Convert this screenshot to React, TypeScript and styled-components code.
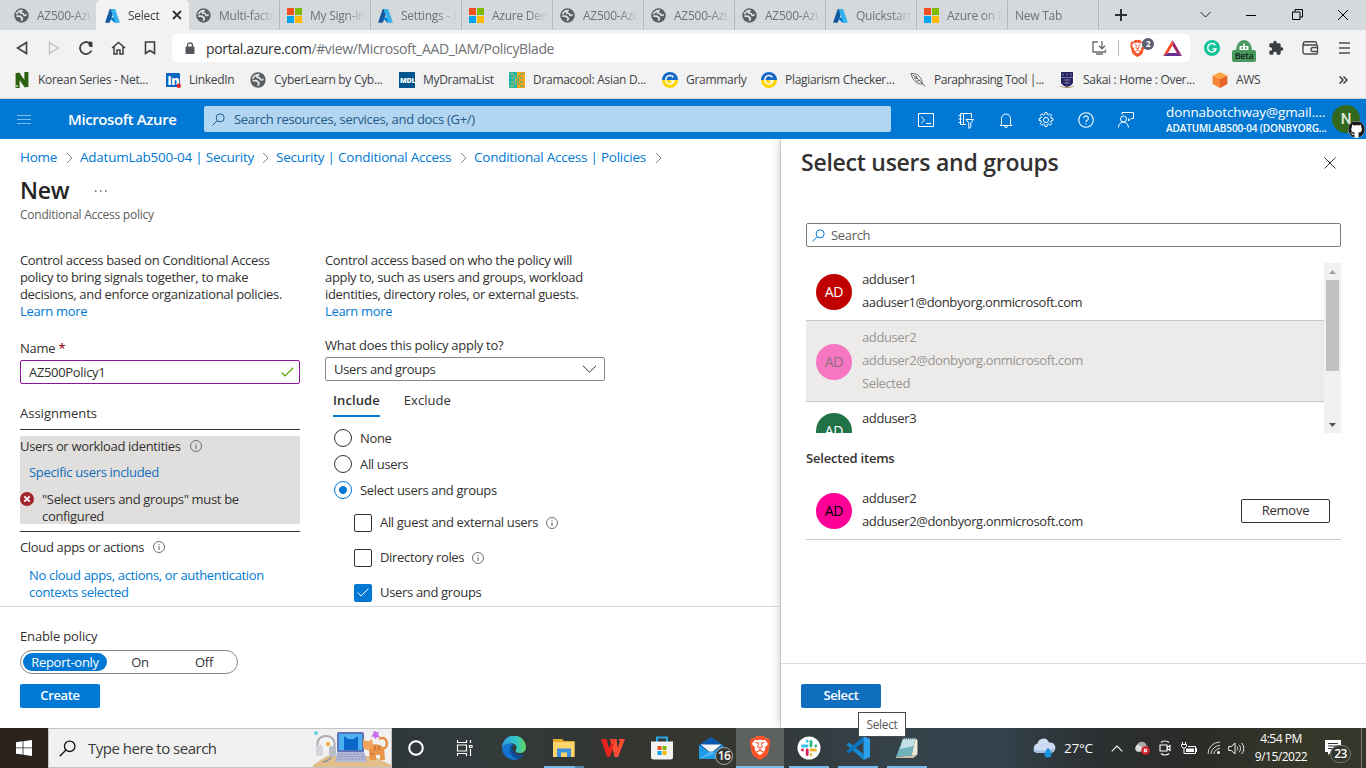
import React from 'react';
import styled, { createGlobalStyle } from 'styled-components';
import { FaGithub } from 'react-icons/fa';
import { SiBrave } from 'react-icons/si';

const GlobalStyle = createGlobalStyle`
  * { box-sizing: border-box; }
  body { margin: 0; background: #fff; overflow: hidden; }
  svg { display: block; flex: none; }
`;

const Screen = styled.div`
  width: 1366px;
  height: 768px;
  display: flex;
  flex-direction: column;
  overflow: hidden;
  position: relative;
  font: 13px/17px "Open Sans", "Noto Sans", sans-serif;
  letter-spacing: -0.33px;
  color: #323130;
  white-space: nowrap;
`;

/* ---------- browser chrome ---------- */

const TabStrip = styled.div`
  height: 30px;
  background: #d5d9dc;
  display: flex;
  padding-left: 6px;
`;
const Tab = styled.div<{ $active?: boolean; $divider?: boolean }>`
  width: 91px;
  height: 30px;
  padding: 0 4px 0 8px;
  display: flex;
  align-items: center;
  gap: 8px;
  font-size: 12px;
  letter-spacing: -0.25px;
  color: ${p => (p.$active ? '#3b3e42' : '#6f7276')};
  background: ${p => (p.$active ? '#f2f2f2' : 'transparent')};
  border-radius: ${p => (p.$active ? '5px 5px 0 0' : '0')};
  box-shadow: ${p => (p.$divider ? 'inset 1px 0 #b4b8ba' : 'none')};
  ${p => p.$active && 'width: 93px; margin: 0 -1px; padding: 0 7px 0 9px;'}
`;
const TabTitle = styled.span<{ $fade: string }>`
  flex: 1;
  overflow: hidden;
  mask-image: linear-gradient(90deg, #000 ${p => p.$fade}, transparent 100%);
`;
const NewTabButton = styled.div`
  width: 45px;
  display: flex;
  align-items: center;
  justify-content: center;
  box-shadow: inset 1px 0 #b4b8ba;
`;
const WindowControls = styled.div`
  display: flex;
  margin-left: auto;
`;
const WindowButton = styled.div`
  width: 46px;
  padding-bottom: 1px;
  display: flex;
  align-items: center;
  justify-content: center;
`;
const Toolbar = styled.div`
  height: 36px;
  background: #f2f2f2;
  display: flex;
  align-items: center;
  padding-left: 6px;
`;
const ToolButton = styled.div<{ $w?: number }>`
  width: ${p => p.$w ?? 32}px;
  height: 32px;
  display: flex;
  align-items: center;
  justify-content: center;
  position: relative;
`;
const AddressBar = styled.div`
  width: 1018px;
  height: 28px;
  margin: 0 6px;
  background: #fff;
  border-radius: 4px;
  display: flex;
  align-items: center;
  padding-left: 13px;
  font-size: 14px;
  letter-spacing: -0.35px;
  color: #6e7175;
`;
const UrlText = styled.span`
  margin-left: 11px;
  flex: 1;
  b { font-weight: 400; color: #2f3235; }
`;
const BarDivider = styled.div`
  width: 1px;
  height: 16px;
  background: #b5b8bb;
`;
const ShieldCount = styled.span`
  position: absolute;
  left: 23px;
  top: 6px;
  width: 12px;
  height: 12px;
  border-radius: 6px;
  background: #5b6070;
  color: #fff;
  font: 700 8px/12px "Open Sans", sans-serif;
  text-align: center;
`;
const BetaBadge = styled.span`
  position: absolute;
  left: 4px;
  top: 18px;
  width: 24px;
  height: 12px;
  border-radius: 2px;
  background: #4a9a5f;
  color: #10241a;
  font: 600 9px/12px "Open Sans", sans-serif;
  text-align: center;
`;
const BookmarksBar = styled.div`
  height: 33px;
  background: #f2f2f2;
  border-bottom: 1px solid #d4d4d4;
  display: flex;
  align-items: center;
  padding: 0 0 4px 14px;
  font-size: 12px;
  color: #3f4246;
`;
const Bookmark = styled.div<{ $w: number }>`
  width: ${p => p.$w}px;
  display: flex;
  align-items: center;
  gap: 8px;
`;
const BookmarkLabel = styled.span<{ $track?: number }>`
  margin-top: -1px;
  letter-spacing: ${p => p.$track ?? -0.3}px;
`;

/* ---------- Azure header ---------- */

const AzureHeader = styled.header`
  height: 40px;
  background: #0078d4;
  color: #fff;
  display: flex;
  align-items: center;
  padding-left: 16px;
`;
const Brand = styled.div`
  width: 136px;
  margin-left: 36px;
  font-size: 15px;
  font-weight: 600;
  letter-spacing: -0.4px;
`;
const GlobalSearch = styled.div`
  width: 687px;
  height: 26px;
  background: #b2d6f2;
  border-radius: 2px;
  display: flex;
  align-items: center;
  gap: 9px;
  padding-left: 8px;
  color: #245a87;
  letter-spacing: -0.3px;
`;
const HeaderIcons = styled.div`
  display: flex;
  margin-left: 15px;
`;
const HeaderIcon = styled.div`
  width: 40px;
  padding-top: 1px;
  display: flex;
  justify-content: center;
  align-items: center;
`;
const Account = styled.div`
  width: 161px;
  margin-left: 20px;
  padding-top: 2px;
`;
const AccountMail = styled.div`
  font-size: 13.5px;
  line-height: 17px;
  letter-spacing: -0.09px;
`;
const AccountTenant = styled.div`
  font-size: 10px;
  font-weight: 600;
  line-height: 15px;
  letter-spacing: -0.13px;
`;
const ProfileCircle = styled.div`
  width: 28px;
  height: 28px;
  margin-left: 5px;
  border-radius: 50%;
  background: #33691e;
  color: #dfe8da;
  font: 500 15px/28px Roboto, sans-serif;
  text-align: center;
  position: relative;
`;
const ProfileMark = styled.div`
  position: absolute;
  left: 16px;
  top: 16px;
  width: 17px;
  height: 17px;
  border-radius: 50%;
  background: #fff;
  color: #1b1b1f;
`;

/* ---------- policy blade ---------- */

const Workspace = styled.div`
  height: 589px;
  display: flex;
`;
const Blade = styled.main`
  width: 781px;
  display: flex;
  flex-direction: column;
`;
const Breadcrumbs = styled.nav`
  display: flex;
  align-items: center;
  padding: 10px 0 0 20px;
  color: #0078d4;
  font-size: 13.5px;
`;
const Crumb = styled.span<{ $w: number; $track?: number }>`
  width: ${p => p.$w}px;
  letter-spacing: ${p => p.$track ?? -0.24}px;
`;
const CrumbChevron = styled.span`
  width: 22px;
  display: flex;
  justify-content: center;
`;
const TitleRow = styled.div`
  display: flex;
  align-items: center;
  height: 32px;
  margin: 9px 0 0 20px;
`;
const PageTitle = styled.h1`
  margin: -2px 0 0;
  width: 75px;
  font-size: 23px;
  line-height: 32px;
  font-weight: 600;
  letter-spacing: -0.3px;
  color: #262423;
`;
const Subtitle = styled.div`
  margin: 0 0 0 20px;
  font-size: 12px;
  line-height: 16px;
  color: #605e5c;
  letter-spacing: -0.25px;
`;
const Columns = styled.div`
  display: flex;
  flex: 1;
  padding: 29px 0 0 20px;
  overflow: hidden;
`;
const Column = styled.section<{ $w: number }>`
  width: ${p => p.$w}px;
  margin-right: 25px;
`;
const Link = styled.a`
  color: #0078d4;
`;
const FieldLabel = styled.div<{ $top: number }>`
  margin: ${p => p.$top}px 0 3px;
  letter-spacing: -0.25px;
  em { color: #a4262c; font-style: normal; font-weight: 600; }
`;
const FieldBox = styled.div<{ $color: string }>`
  height: 24px;
  border: 1px solid ${p => p.$color};
  border-radius: 2px;
  display: flex;
  align-items: center;
  justify-content: space-between;
  padding: 0 5px 0 8px;
`;
const SectionHead = styled.div`
  margin-top: 20px;
  padding-top: 1px;
  height: 26px;
  border-bottom: 1px solid #323130;
  letter-spacing: 0;
`;
const AssignmentCard = styled.div<{ $active?: boolean }>`
  margin-top: ${p => (p.$active ? 6 : 5)}px;
  background: ${p => (p.$active ? '#e1dfdd' : 'transparent')};
  height: ${p => (p.$active ? 88 : 70)}px;
`;
const LabelRow = styled.div`
  display: flex;
  align-items: center;
  gap: 9px;
  height: 20px;
  line-height: 19px;
`;
const AssignmentLink = styled.div<{ $hover?: boolean }>`
  padding: ${p => (p.$hover ? 8 : 10)}px 0 0 9px;
  color: ${p => (p.$hover ? '#106ebe' : '#0078d4')};
`;
const ErrorRow = styled.div`
  display: flex;
  gap: 8px;
  margin-top: 10px;
`;
const SectionRule = styled.div`
  margin-top: 7px;
  height: 1px;
  background: #323130;
`;
const Pivot = styled.div`
  display: flex;
  gap: 24px;
  padding: 10px 0 0 8px;
`;
const PivotItem = styled.div<{ $active?: boolean }>`
  height: 26px;
  padding-top: 1px;
  font-weight: ${p => (p.$active ? 600 : 400)};
  letter-spacing: ${p => (p.$active ? 0.1 : 0.04)}px;
  border-bottom: ${p => (p.$active ? '2px solid #0078d4' : 'none')};
`;
const OptionRow = styled.div<{ $h: number; $indent: number }>`
  height: ${p => p.$h}px;
  padding-left: ${p => p.$indent}px;
  display: flex;
  align-items: center;
  gap: 8px;
`;
const OptionGroup = styled.div<{ $top: number }>`
  margin-top: ${p => p.$top}px;
`;
const Radio = styled.span<{ $on?: boolean }>`
  width: 18px;
  height: 18px;
  border-radius: 50%;
  border: 1px solid ${p => (p.$on ? '#0078d4' : '#323130')};
  background: ${p => (p.$on ? 'radial-gradient(circle, #0078d4 3.6px, transparent 4.3px)' : '#fff')};
`;
const Check = styled.span<{ $on?: boolean }>`
  width: 18px;
  height: 18px;
  border-radius: 2px;
  border: 1px solid ${p => (p.$on ? '#0078d4' : '#323130')};
  background: ${p => (p.$on ? '#0078d4' : '#fff')};
  display: flex;
  align-items: center;
  justify-content: center;
`;
const BladeFooter = styled.footer`
  height: 122px;
  border-top: 1px solid #dcdcdc;
  padding: 21px 0 0 20px;
  letter-spacing: -0.15px;
`;
const Segmented = styled.div`
  width: 218px;
  height: 24px;
  margin: 5px 0 10px;
  border: 1px solid #8a8886;
  border-radius: 12px;
  display: flex;
  padding: 2px;
`;
const Segment = styled.span<{ $w: number; $on?: boolean }>`
  width: ${p => p.$w}px;
  line-height: 18px;
  text-align: center;
  border-radius: 9px;
  background: ${p => (p.$on ? '#0078d4' : 'transparent')};
  color: ${p => (p.$on ? '#fff' : '#323130')};
  font-weight: ${p => (p.$on ? 500 : 400)};
  letter-spacing: -0.3px;
`;
const PrimaryButton = styled.button<{ $hover?: boolean }>`
  display: block;
  width: 80px;
  height: 24px;
  padding: 0 0 1px;
  border: 0;
  border-radius: 2px;
  background: ${p => (p.$hover ? '#106ebe' : '#0078d4')};
  color: #fff;
  font: inherit;
  font-weight: 600;
  letter-spacing: -0.35px;
`;

/* ---------- user picker ---------- */

const Picker = styled.aside`
  width: 585px;
  background: #fff;
  box-shadow: 0 0 10px rgba(0, 0, 0, 0.25), -1px 0 #e0e0e0;
  clip-path: inset(0 0 0 -14px);
  display: flex;
  flex-direction: column;
`;
const PickerHead = styled.div`
  height: 84px;
  padding: 8px 30px 0 20px;
  display: flex;
  justify-content: space-between;
`;
const PickerTitle = styled.h2`
  margin: 0;
  font-size: 23px;
  line-height: 31px;
  font-weight: 600;
  letter-spacing: -0.25px;
`;
const CloseButton = styled.div`
  padding-top: 10px;
`;
const PickerBody = styled.div`
  flex: 1;
  padding: 0 25px;
`;
const SearchBox = styled.div`
  height: 24px;
  border: 1px solid #7d7b79;
  border-radius: 2px;
  display: flex;
  align-items: center;
  gap: 6px;
  padding-left: 5px;
  color: #605e5c;
`;
const ListFrame = styled.div`
  display: flex;
  height: 170px;
  margin-top: 16px;
  overflow: hidden;
`;
const UserList = styled.div`
  flex: 1;
`;
const UserRow = styled.div<{ $picked?: boolean }>`
  padding: 5px 10px 6px;
  border-bottom: 1px solid #c8c8c8;
  background: ${p => (p.$picked ? '#edebe9' : '#fff')};
  color: ${p => (p.$picked ? '#979593' : '#323130')};
  display: flex;
  align-items: center;
`;
const UserLines = styled.div`
  flex: 1;
  line-height: 23px;
  letter-spacing: -0.39px;
`;
const Persona = styled.div<{ $bg: string; $fg: string }>`
  width: 36px;
  height: 36px;
  margin: 2px 10px 0 0;
  border-radius: 50%;
  background: ${p => p.$bg};
  color: ${p => p.$fg};
  font-size: 14px;
  line-height: 36px;
  text-align: center;
`;
const Scrollbar = styled.div`
  width: 17px;
  background: #f1f1f1;
  display: flex;
  flex-direction: column;
  align-items: center;
`;
const ScrollArrow = styled.div`
  height: 17px;
  display: flex;
  align-items: center;
`;
const ScrollThumb = styled.div`
  width: 13px;
  height: 91px;
  margin-bottom: auto;
  background: #c1c1c1;
`;
const SelectedTitle = styled.div`
  margin: 17px 0 15px;
  font-weight: 600;
  letter-spacing: -0.2px;
`;
const RemoveButton = styled.button`
  width: 89px;
  height: 24px;
  margin: 2px 1px 0 0;
  padding: 0 0 1px;
  border: 1px solid #323130;
  border-radius: 2px;
  background: #fff;
  font: inherit;
  color: #323130;
  font-weight: 500;
  letter-spacing: -0.25px;
`;
const PickerFooter = styled.footer`
  height: 65px;
  border-top: 1px solid #dcdcdc;
  padding: 20px;
`;
const Tooltip = styled.div`
  position: absolute;
  left: 858px;
  top: 712px;
  z-index: 3;
  width: 48px;
  height: 25px;
  border: 1px solid #4a4a4a;
  background: #fff;
  color: #575757;
  font-size: 12px;
  line-height: 23px;
  text-align: center;
`;

/* ---------- taskbar ---------- */

const Taskbar = styled.div`
  height: 40px;
  display: flex;
  background: linear-gradient(90deg, #2b221b 0, #2b221b 48px, #31383a 392px, #323a3a 500px, #34352f 640px, #353831 740px, #333b3e 800px, #35424a 900px, #34424c 1000px, #2b3032 1090px, #2c2b28 1200px, #36382a 1300px, #34362b 100%);
  color: #fff;
`;
const StartButton = styled.div`
  width: 48px;
  display: flex;
  align-items: center;
  justify-content: center;
`;
const TaskSearch = styled.div`
  width: 344px;
  background: #f1f1f1;
  border: 1px solid #c4c4c4;
  display: flex;
  align-items: center;
  padding-left: 10px;
  color: #3a3a3a;
  font-size: 15px;
  letter-spacing: -0.5px;
`;
const TaskHint = styled.span`
  width: 226px;
  margin-left: 12px;
`;
const TaskIcon = styled.div<{ $w: number; $active?: boolean }>`
  width: ${p => p.$w}px;
  height: 40px;
  display: flex;
  align-items: center;
  justify-content: center;
  position: relative;
  background: ${p => (p.$active ? '#5e625e' : 'transparent')};
`;
const RunningBar = styled.span<{ $w: number }>`
  position: absolute;
  bottom: 0;
  left: 50%;
  width: ${p => p.$w}px;
  margin-left: ${p => -p.$w / 2}px;
  height: 2px;
  background: #76b9ed;
`;
const StackedBar = styled(RunningBar)`
  background: linear-gradient(90deg, #76b9ed 31px, #5182a8 31px);
`;
const CountBubble = styled.span<{ $x: number; $y: number; $dim?: boolean }>`
  position: absolute;
  left: ${p => p.$x}px;
  top: ${p => p.$y}px;
  width: ${p => (p.$dim ? 21 : 18)}px;
  height: 18px;
  border-radius: 9px;
  border: 1px solid ${p => (p.$dim ? '#77776f' : '#a5a8a6')};
  background: #33352f;
  color: #fff;
  font-size: 12px;
  font-weight: 600;
  line-height: 15px;
  letter-spacing: -0.6px;
  text-align: center;
`;
const Tray = styled.div`
  display: flex;
  align-items: center;
  margin-left: auto;
`;
const TrayItem = styled.div<{ $w: number }>`
  width: ${p => p.$w}px;
  display: flex;
  justify-content: center;
`;
const Temperature = styled.div`
  width: 42px;
  margin-left: 8px;
  font-size: 13.5px;
  letter-spacing: -0.2px;
`;
const Clock = styled.div`
  width: 70px;
  text-align: center;
  font-size: 12px;
  line-height: 18px;
  letter-spacing: -0.5px;
`;
const NoticeCenter = styled.div`
  width: 45px;
  height: 40px;
  padding: 12px 0 0 9px;
  position: relative;
`;
const PeekStrip = styled.div`
  width: 5px;
  height: 40px;
  border-left: 1px solid #7b7c72;
`;

/* ---------- drawings ---------- */

const Globe = ({ s = 15 }: { s?: number }) => (
  <svg width={s} height={s} viewBox="0 0 16 16">
    <circle cx="8" cy="8" r="7.7" fill="#5a5d61" />
    <path d="M2.600 6.800C3.500 4.200 5.600 2.700 8.600 2.600c.3 1.200-1.900 1-1.900 2.200 0 1.300 2 .5 3 1.200 1 .8.400 2 1.600 2 .9 0 1.300-.8 2.300-.6" fill="none" stroke="#dfe2e4" strokeWidth="1.700" />
    <path d="M2.500 8.600h2.800c2.600 0 1.800 1.300 3 1.700 1.300.5.3 2.200-.8 3.200" fill="none" stroke="#dfe2e4" strokeWidth="1.900" />
  </svg>
);
const AzureMark = () => (
  <svg width="15" height="15" viewBox="0 0 96 96">
    <path d="M33 6h29L32 90a6 6 0 0 1-5 4H8a5 5 0 0 1-5-7L29 9a5 5 0 0 1 4-3z" fill="#12599f" />
    <path d="M71 61H28l28 29a7 7 0 0 0 5 2h22z" fill="#0078d4" />
    <path d="M66 9a5 5 0 0 0-5-3H35l28 81a5 5 0 0 1-5 7h30a5 5 0 0 0 5-7z" fill="#36b3ee" />
  </svg>
);
const MicrosoftMark = () => (
  <svg width="15" height="15" viewBox="0 0 15 15">
    <path d="M0 0h7v7H0z" fill="#f25022" />
    <path d="M8 0h7v7H8z" fill="#7fba00" />
    <path d="M0 8h7v7H0z" fill="#00a4ef" />
    <path d="M8 8h7v7H8z" fill="#ffb900" />
  </svg>
);
const Stroke = ({ w, h = w, d, c = 'currentColor', sw = 1 }: { w: number; h?: number; d: string; c?: string; sw?: number }) => (
  <svg width={w} height={h} viewBox={`0 0 ${w} ${h}`} fill="none" stroke={c} strokeWidth={sw}>
    <path d={d} />
  </svg>
);
const Info = () => (
  <svg width="12" height="12" viewBox="0 0 12 12" fill="none" stroke="#605e5c">
    <circle cx="6" cy="6" r="5.5" strokeWidth=".9" />
    <path d="M6 5v4M6 3v1" />
  </svg>
);
const Magnifier = ({ c, s = 13 }: { c: string; s?: number }) => (
  <svg width={s} height={s} viewBox="0 0 13 13" fill="none" stroke={c}>
    <circle cx="8.2" cy="4.8" r="4" />
    <path d="M5.3 7.7L.6 12.4" />
  </svg>
);
const BraveShield = ({ s }: { s: number }) => (
  <svg width={s} height={s} viewBox="0 0 24 24">
    <path d="M6 2h12l3 4-1 11-8 6-8-6L3 6z" fill="#fff" />
    <SiBrave width="24" height="24" size={24} color="#fb542b" />
  </svg>
);
const GrammarlyMark = () => (
  <svg width="16" height="16" viewBox="0 0 16 16">
    <path d="M0 8a8 8 0 0 1 16 0z" fill="#1468c8" />
    <path d="M0 8a8 8 0 0 0 16 0z" fill="#ffd500" />
    <path d="M11.300 5.200A4.200 4.200 0 1 0 12 9H8.600" fill="none" stroke="#fff" strokeWidth="1.500" />
  </svg>
);

const tabs = [
  { icon: <Globe />, title: 'AZ500-Azu' },
  { icon: <AzureMark />, title: 'Select', active: true },
  { icon: <Globe />, title: 'Multi-facto' },
  { icon: <MicrosoftMark />, title: 'My Sign-In' },
  { icon: <AzureMark />, title: 'Settings - M' },
  { icon: <MicrosoftMark />, title: 'Azure Dem' },
  { icon: <Globe />, title: 'AZ500-Azu' },
  { icon: <Globe />, title: 'AZ500-Azu' },
  { icon: <Globe />, title: 'AZ500-Azu' },
  { icon: <AzureMark />, title: 'Quickstart' },
  { icon: <MicrosoftMark />, title: 'Azure on M' },
  { icon: null, title: 'New Tab' },
];

const bookmarks = [
  {
    w: 151, label: 'Korean Series - Net...',
    icon: (
      <svg width="16" height="16" viewBox="0 0 16 16">
        <path d="M3.600 16V1M12.400 15V0M3.400 1.500l9.200 13" stroke="#2c5f10" strokeWidth="4" fill="none" />
        <circle cx="3" cy="14" r="1.200" fill="#9cc48a" />
      </svg>
    ),
  },
  {
    w: 85, label: 'LinkedIn',
    icon: (
      <svg width="16" height="16" viewBox="0 0 16 16">
        <rect x="1" y="1" width="14" height="14" rx="1" fill="#0a66c2" />
        <text x="2.600" y="12.800" fontFamily="Open Sans" fontWeight="800" fontSize="12.500" letterSpacing="-.5" fill="#fff">in</text>
        <circle cx="13.800" cy="13.800" r="2.200" fill="#e0202c" />
      </svg>
    ),
  },
  { w: 149, label: 'CyberLearn by Cyb...', icon: <Globe s={16} /> },
  {
    w: 110, label: 'MyDramaList',
    icon: (
      <svg width="16" height="16" viewBox="0 0 16 16">
        <path d="M0 0h16v16H0z" fill="#00568c" />
        <text x="1" y="10.600" fontFamily="Open Sans" fontWeight="800" fontSize="7" letterSpacing="-.2" fill="#fff">MDL</text>
      </svg>
    ),
  },
  {
    w: 153, label: 'Dramacool: Asian D...',
    icon: (
      <svg width="16" height="16" viewBox="0 0 16 16" fill="none">
        <path d="M0 0h8v16H0z" fill="#1db5b0" />
        <path d="M8 0h8v16H8z" fill="#f5a81c" />
        <path d="M1 1.500c4 .5 6 3 6 6.500s-2 6-6 6.500M2.500 6h2M2 10.500c1.500 0 2.500-.8 3-2" stroke="#f5c02c" />
        <path d="M15 1.500c-4 .5-6 3-6 6.500s2 6 6 6.500M13.500 6h-2M14 10.500c-1.500 0-2.500-.8-3-2" stroke="#23a19c" />
      </svg>
    ),
  },
  { w: 99, label: 'Grammarly', icon: <GrammarlyMark /> },
  { w: 149, label: 'Plagiarism Checker...', icon: <GrammarlyMark /> },
  {
    w: 149, label: 'Paraphrasing Tool |...', track: -0.5,
    icon: (
      <svg width="16" height="16" viewBox="0 0 16 16" fill="none" stroke="#55585c" strokeWidth=".9">
        <path d="M1 1.500c5-.5 9.500 2 11 8l.5 2.500c-4 0-6-1-8-3.500S1.500 4 1 1.500zM2.500 3c4 2 8 6 12.500 11.500M4 6l4 .5M6 9l4-.3M6 3.500l.8 2.500" />
      </svg>
    ),
  },
  {
    w: 153, label: 'Sakai : Home : Over...',
    icon: (
      <svg width="16" height="16" viewBox="0 0 16 16" fill="none">
        <path d="M1 0h14v16H1z" fill="#fff" />
        <path d="M2 0h12v10c0 2.500-3 4-6 5-3-1-6-2.500-6-5z" fill="#211f5e" />
        <path d="M4 1v3M8 1v3M12 1v3M2 5.500h12M4.500 8h7M4.500 11h7M8 7v6" stroke="#8d8bb5" strokeWidth=".8" />
        <path d="M1 14c4 2 10 2 14 0" stroke="#a08b5c" />
      </svg>
    ),
  },
  {
    w: 127, label: 'AWS',
    icon: (
      <svg width="16" height="16" viewBox="0 0 16 16">
        <path d="M8 .2l7.200 3.300L8 7 .8 3.500z" fill="#fba63c" />
        <path d="M.6 3.600L8 7v9L.6 12z" fill="#f68536" />
        <path d="M15.400 3.600L8 7v9l7.400-4z" fill="#e8612a" />
      </svg>
    ),
  },
];

const headerIcons = [
  <Stroke w={16} d="M.5 1.500h15v13H.5zM3 4.500l3.500 3.500L3 11.500M8 11.500h5" />,
  <svg width="18" height="18" viewBox="0 0 18 18" fill="none" stroke="currentColor">
    <path d="M14.500 7V2.500H3.500v11H9M1.500 4.500h3M1.500 8h3M1.500 11.500h3M6.500 2.500v11M9 8.500h7.500l-2.700 3.500v4l-2 1.500V12z" />
  </svg>,
  <Stroke w={16} d="M3.500 12V6.500a4.500 4.500 0 0 1 9 0V12l1.500 1.500H2zM6.500 14a1.500 1.500 0 0 0 3 0" />,
  <svg width="18" height="18" viewBox="0 0 18 18" fill="none" stroke="currentColor">
    <circle cx="9" cy="9" r="2.600" />
    <path d="M7.700 3.500 8 1.500h2l.3 2 1.300.5 1.600-1.200 1.500 1.500-1.200 1.600.5 1.300 2 .3v2l-2 .3-.5 1.300 1.200 1.600-1.500 1.500-1.600-1.200-1.300.5-.3 2H8l-.3-2-1.300-.5-1.600 1.200-1.500-1.500 1.200-1.600-.5-1.300-2-.3v-2l2-.3.5-1.300-1.200-1.600 1.500-1.500L6.400 4z" />
  </svg>,
  <svg width="16" height="16" viewBox="0 0 16 16" fill="none" stroke="currentColor" strokeWidth="1.100">
    <circle cx="8" cy="8" r="7.300" />
    <path d="M5.700 6.200a2.300 2.300 0 1 1 3.500 2c-.8.5-1.200.9-1.200 1.900M8 11.200v1.300" />
  </svg>,
  <svg width="18" height="18" viewBox="0 0 18 18" fill="none" stroke="currentColor">
    <circle cx="6.500" cy="8" r="3" />
    <path d="M1.500 16.500c0-3.500 2-5.300 5-5.300s4.500 1.800 5 5.300M5 3.500V1.500h11.500v6H14L11.500 10V7.500" />
  </svg>,
];

const crumbs = [
  { text: 'Home', w: 38 },
  { text: 'AdatumLab500-04 | Security', w: 174 },
  { text: 'Security | Conditional Access', w: 176 },
  { text: 'Conditional Access | Policies', w: 173 },
];

const Slack = () => (
  <svg width="24" height="24" viewBox="0 0 24 24" fill="none" strokeLinecap="round" strokeWidth="2.800">
    <circle cx="12" cy="12" r="11.500" fill="#fff" stroke="none" />
    <path d="M10.200 5.200v.1M5.500 10h4.700" stroke="#36c5f0" />
    <path d="M14 5.500v4.500M18.700 10h.1" stroke="#2eb67d" />
    <path d="M18.500 14H14M14 18.700v.1" stroke="#ecb22e" />
    <path d="M10.200 18.500V14M5.400 14h.1" stroke="#e01e5a" />
  </svg>
);
const VsCode = () => (
  <svg width="24" height="24" viewBox="0 0 24 24">
    <path d="M17.500 24v-6L3 6.500.5 8.700z" fill="#1488d1" />
    <path d="M17.500 0v6L3 17.500.5 15.300z" fill="#0b71b8" />
    <path d="M17.500 0L24 3v18l-6.500 3z" fill="#2ba0ec" />
  </svg>
);
const Notepad = () => (
  <svg width="24" height="24" viewBox="0 0 24 24">
    <path d="M8 2.500h12.500L16.500 19.500 1 21z" fill="#6fb1bd" />
    <path d="M8 2.500h12.500L18.500 10 5 13z" fill="#c3e2e6" />
    <path d="M20.500 2.500l2 1.500v14.500L16.500 20z" fill="#efe9d8" />
    <path d="M1 21l15.500-1.500 6-1-4 3.500H1z" fill="#c9c3ae" />
    <path d="M8 2.500h12.500" stroke="#5b6a70" strokeDasharray="1 1" strokeWidth="2" />
  </svg>
);

const SearchArt = () => (
  <svg width="78" height="38" viewBox="0 0 78 38" fill="none">
    <path d="M0 36l14-9h46l18 9v2H0z" fill="#e3bd8a" />
    <circle cx="3" cy="4" r="2" fill="#61d3e2" />
    <path d="M5 20C3 11 7 7 13 7s10 4 8 13" stroke="#a9adb5" strokeWidth="2" />
    <rect x="3" y="16" width="7" height="11" rx="3" fill="#d3d5da" />
    <rect x="16" y="17" width="7" height="11" rx="3" fill="#b9bdc6" />
    <circle cx="15" cy="15" r="2" fill="#f3a71a" />
    <path d="M18 28c-1 3-4 4-8 5" stroke="#8f949c" strokeWidth="1.500" />
    <rect x="24" y="3" width="27" height="20" rx="1.500" fill="#5b72b5" />
    <rect x="26" y="5" width="23" height="16" fill="#4ab0f2" />
    <path d="M31 21V7l4 3h6l4-3v14z" fill="#0c66c9" />
    <path d="M24 23h27l3 10H22z" fill="#b3b9d6" />
    <path d="M25 25h26M24.500 27.500h28M24 30h29" stroke="#7f88b4" strokeWidth=".8" strokeDasharray="2 1" />
    <path d="M61 1.500l2.500 2 2.500-1-1 3 2 2.500-3 0-1.500 2.500-1.500-2.700-3-.3 2-2z" fill="#c66cf0" />
    <path d="M69 20c5-1 6-5 4-9-1-2-4-3-7-1" stroke="#e2914a" strokeWidth="2.500" />
    <path d="M55 16c6-1 12-2 16 3l1 12h-5v-5h-4v5h-6l-1-9z" fill="#e9954c" />
    <path d="M50 9.500l3 2.500h3l3-2.500 1 8c0 4-9 5-10 0z" fill="#f0a35a" />
    <path d="M62 17v4M66 17v4M57 25h4" stroke="#b9622a" />
  </svg>
);

export default function App() {
  return (
    <Screen>
      <GlobalStyle />
      <TabStrip>
        {tabs.map((t, i) => (
          <Tab key={i} $active={t.active} $divider={i > 2}>
            {t.icon}
            <TabTitle $fade={t.active || !t.icon ? '98%' : '65%'}>{t.title}</TabTitle>
            {t.active && <Stroke w={10} d="M1 1l8 8M9 1l-8 8" c="#2e3135" sw={1.8} />}
          </Tab>
        ))}
        <NewTabButton><Stroke w={12} d="M6 0v12M0 6h12" c="#2e3135" sw={2} /></NewTabButton>
        <WindowControls>
          <WindowButton><Stroke w={11} h={7} d="M.5 1l5 5 5-5" c="#222" /></WindowButton>
          <WindowButton><Stroke w={10} d="M0 5.500h10" c="#000" /></WindowButton>
          <WindowButton><Stroke w={11} d="M.5 3h7.500v7.500H.5zM3 3V.5h7.500V8H8" c="#000" /></WindowButton>
          <WindowButton><Stroke w={10} d="M0 0l10 10M10 0L0 10" c="#000" /></WindowButton>
        </WindowControls>
      </TabStrip>

      <Toolbar>
        <ToolButton><Stroke w={12} h={14} d="M10.500 1.500v11L1.500 7z" c="#3b3e42" sw={1.6} /></ToolButton>
        <ToolButton><Stroke w={12} h={14} d="M1.500 1.500v11L10.500 7z" c="#bdbfc1" sw={1.3} /></ToolButton>
        <ToolButton>
          <svg width="14" height="14" viewBox="0 0 14 14" fill="none" stroke="#3b3e42" strokeWidth="1.800">
            <path d="M12.500 9.500A6 6 0 1 1 11 2.500" />
            <path d="M9.500 3.500a2 2 0 0 1 4-1.500v4h-2a2.500 2.500 0 0 1-2-2.500z" fill="#3b3e42" stroke="none" />
          </svg>
        </ToolButton>
        <ToolButton><Stroke w={15} h={14} d="M1 7l6.500-5.500L14 7M3 5.500v7.500h3V9h3v4h3V5.500" c="#3b3e42" sw={1.5} /></ToolButton>
        <ToolButton><Stroke w={12} h={14} d="M1.500 1h9v11.500L6 9.500l-4.500 3z" c="#3b3e42" sw={1.6} /></ToolButton>
        <AddressBar>
          <svg width="10" height="12" viewBox="0 0 10 12">
            <path d="M1 5h8v6.500H1z" fill="#54575b" stroke="#54575b" />
            <path d="M2.500 5V3.300a2.500 2.500 0 0 1 5 0V5" fill="none" stroke="#54575b" strokeWidth="1.300" />
          </svg>
          <UrlText><b>portal.azure.com</b>/#view/Microsoft_AAD_IAM/PolicyBlade</UrlText>
          <ToolButton $w={38}>
            <Stroke w={15} h={14} d="M6 1H1v10h12.500V8.500M4 13h7M10 0v7.500M7 4.800l3 3 3-3" c="#6b6e72" sw={1.4} />
          </ToolButton>
          <BarDivider />
          <ToolButton $w={36}><BraveShield s={17} /><ShieldCount>2</ShieldCount></ToolButton>
          <ToolButton $w={35}>
            <svg width="19" height="16" viewBox="0 0 19 16">
              <path d="M9.500 0L0 16l5-3 4.500-7.500z" fill="#ff4724" />
              <path d="M0 16h19l-5-3H5z" fill="#662d91" />
              <path d="M9.500 0L19 16l-5-3-4.500-7.500z" fill="#9e1f63" />
            </svg>
          </ToolButton>
        </AddressBar>
        <ToolButton>
          <svg width="16" height="16" viewBox="0 0 16 16">
            <circle cx="8" cy="8" r="8" fill="#15c39a" />
            <path d="M11.300 5.200A4.200 4.200 0 1 0 12 9H8.600" fill="none" stroke="#fff" strokeWidth="1.500" />
          </svg>
        </ToolButton>
        <ToolButton>
          <svg width="16" height="18" viewBox="0 0 16 18">
            <path d="M0 11a8 10 0 0 1 16 0z" fill="#4a9a5f" />
            <path d="M3.500 11V7h9v4z" fill="#fff" />
            <path d="M8 7V4.500" stroke="#fff" strokeWidth="1.500" />
            <path d="M5.500 8h1.500v2H5.500zM9 8h1.500v2H9z" fill="#4a9a5f" />
          </svg>
          <BetaBadge>Beta</BetaBadge>
        </ToolButton>
        <ToolButton>
          <svg width="16" height="16" viewBox="0 0 24 24">
            <path d="M20.500 11H19V7a2 2 0 0 0-2-2h-4V3.500a2.500 2.500 0 0 0-5 0V5H4a2 2 0 0 0-2 2v3.800h1.500a2.700 2.700 0 0 1 0 5.400H2V20a2 2 0 0 0 2 2h3.800v-1.500a2.700 2.700 0 0 1 5.400 0V22H17a2 2 0 0 0 2-2v-4h1.500a2.500 2.500 0 0 0 0-5z" fill="#3b3e42" />
          </svg>
        </ToolButton>
        <ToolButton $w={36}>
          <Stroke w={17} h={14} d="M14.500 3.500V2.300a1.500 1.500 0 0 0-1.500-1.500H2.500a1.700 1.700 0 0 0 0 3.200H14.500a1 1 0 0 1 1 1v7a1 1 0 0 1-1 1H3a2 2 0 0 1-2-2V2.500M15.500 6.500H11a2 2 0 0 0 0 4h4.500" c="#4a4d51" sw={1.4} />
        </ToolButton>
        <ToolButton><Stroke w={11} h={12} d="M0 1h11M0 6h11M0 11h11" c="#4a4d51" sw={1.6} /></ToolButton>
      </Toolbar>

      <BookmarksBar>
        {bookmarks.map(b => (
          <Bookmark key={b.label} $w={b.w}>{b.icon}<BookmarkLabel $track={b.track}>{b.label}</BookmarkLabel></Bookmark>
        ))}
        <Stroke w={9} h={8} d="M.5 .5L4 4 .5 7.500M4.500 .5L8 4 4.500 7.500" c="#3b3e42" sw={1.5} />
      </BookmarksBar>

      <AzureHeader>
        <Stroke w={16} h={11} d="M1 1.500h14M1 5.500h14M1 9.500h14" c="#7fbcea" />
        <Brand>Microsoft Azure</Brand>
        <GlobalSearch>
          <Magnifier c="#245a87" />
          Search resources, services, and docs (G+/)
        </GlobalSearch>
        <HeaderIcons>
          {headerIcons.map((icon, i) => <HeaderIcon key={i}>{icon}</HeaderIcon>)}
        </HeaderIcons>
        <Account>
          <AccountMail>donnabotchway@gmail....</AccountMail>
          <AccountTenant>ADATUMLAB500-04 (DONBYORG...</AccountTenant>
        </Account>
        <ProfileCircle>N<ProfileMark><FaGithub size={17} /></ProfileMark></ProfileCircle>
      </AzureHeader>

      <Workspace>
        <Blade>
          <Breadcrumbs>
            {crumbs.map(c => (
              <React.Fragment key={c.text}>
                <Crumb $w={c.w}>{c.text}</Crumb>
                <CrumbChevron><Stroke w={7} h={12} d="M1 1l5 5-5 5" c="#8a8886" /></CrumbChevron>
              </React.Fragment>
            ))}
          </Breadcrumbs>
          <TitleRow>
            <PageTitle>New</PageTitle>
            <Stroke w={12} h={2} d="M0 1h1.500M5 1h1.500M10 1h1.500" c="#605e5c" sw={1.3} />
          </TitleRow>
          <Subtitle>Conditional Access policy</Subtitle>
          <Columns>
            <Column $w={280}>
              <div>
                Control access based on Conditional Access<br />
                policy to bring signals together, to make<br />
                decisions, and enforce organizational policies.<br />
                <Link>Learn more</Link>
              </div>
              <FieldLabel $top={20}>Name <em>*</em></FieldLabel>
              <FieldBox $color="#881798">
                AZ500Policy1
                <Stroke w={13} h={10} d="M.7 5.500l3.300 3.500L12.300.8" c="#57a300" sw={1.2} />
              </FieldBox>
              <SectionHead>Assignments</SectionHead>
              <AssignmentCard $active>
                <LabelRow>Users or workload identities <Info /></LabelRow>
                <AssignmentLink $hover>Specific users included</AssignmentLink>
                <ErrorRow>
                  <svg width="14" height="17" viewBox="0 0 14 17">
                    <circle cx="7" cy="8" r="7" fill="#a4262c" />
                    <path d="M4.300 5.300l5.400 5.400M9.700 5.300l-5.400 5.400" stroke="#fff" strokeWidth="1.800" />
                  </svg>
                  <span>"Select users and groups" must be<br />configured</span>
                </ErrorRow>
              </AssignmentCard>
              <SectionRule />
              <AssignmentCard>
                <LabelRow>Cloud apps or actions <Info /></LabelRow>
                <AssignmentLink>No cloud apps, actions, or authentication<br />contexts selected</AssignmentLink>
              </AssignmentCard>
            </Column>
            <Column $w={280}>
              <div>
                Control access based on who the policy will<br />
                apply to, such as users and groups, workload<br />
                identities, directory roles, or external guests.<br />
                <Link>Learn more</Link>
              </div>
              <FieldLabel $top={17}>What does this policy apply to?</FieldLabel>
              <FieldBox $color="#8a8886">
                Users and groups
                <Stroke w={19} h={8} d="M3 .8l6.500 6.400L16 .8" c="#323130" />
              </FieldBox>
              <Pivot>
                <PivotItem $active>Include</PivotItem>
                <PivotItem>Exclude</PivotItem>
              </Pivot>
              <OptionGroup $top={8}>
                <OptionRow $h={26} $indent={9}><Radio />None</OptionRow>
                <OptionRow $h={26} $indent={9}><Radio />All users</OptionRow>
                <OptionRow $h={26} $indent={9}><Radio $on />Select users and groups</OptionRow>
              </OptionGroup>
              <OptionGroup $top={2}>
                <OptionRow $h={35} $indent={29}><Check />All guest and external users <Info /></OptionRow>
                <OptionRow $h={35} $indent={29}><Check />Directory roles <Info /></OptionRow>
                <OptionRow $h={35} $indent={29}>
                  <Check $on><Stroke w={12} h={9} d="M.7 4.500L4 8l7.300-7.200" c="#fff" /></Check>
                  Users and groups
                </OptionRow>
              </OptionGroup>
            </Column>
          </Columns>
          <BladeFooter>
            Enable policy
            <Segmented>
              <Segment $w={84} $on>Report-only</Segment>
              <Segment $w={66}>On</Segment>
              <Segment $w={62}>Off</Segment>
            </Segmented>
            <PrimaryButton>Create</PrimaryButton>
          </BladeFooter>
        </Blade>

        <Picker>
          <PickerHead>
            <PickerTitle>Select users and groups</PickerTitle>
            <CloseButton><Stroke w={12} d="M.5 .5l11 11M11.500 .5l-11 11" c="#323130" /></CloseButton>
          </PickerHead>
          <PickerBody>
            <SearchBox><Magnifier c="#0078d4" />Search</SearchBox>
            <ListFrame>
              <UserList>
                <UserRow>
                  <Persona $bg="#c00000" $fg="#fff">AD</Persona>
                  <UserLines>adduser1<br />aaduser1@donbyorg.onmicrosoft.com</UserLines>
                </UserRow>
                <UserRow $picked>
                  <Persona $bg="#f776c1" $fg="#8d6f82">AD</Persona>
                  <UserLines>adduser2<br />adduser2@donbyorg.onmicrosoft.com<br />Selected</UserLines>
                </UserRow>
                <UserRow>
                  <Persona $bg="#217346" $fg="#fff">AD</Persona>
                  <UserLines>adduser3<br />adduser3@donbyorg.onmicrosoft.com</UserLines>
                </UserRow>
              </UserList>
              <Scrollbar>
                <ScrollArrow><svg width="7" height="4" viewBox="0 0 7 4"><path d="M0 4l3.500-4L7 4z" fill="#a3a3a3" /></svg></ScrollArrow>
                <ScrollThumb />
                <ScrollArrow><svg width="7" height="4" viewBox="0 0 7 4"><path d="M0 0l3.500 4L7 0z" fill="#505050" /></svg></ScrollArrow>
              </Scrollbar>
            </ListFrame>
            <SelectedTitle>Selected items</SelectedTitle>
            <UserRow>
              <Persona $bg="#ff0097" $fg="#000">AD</Persona>
              <UserLines>adduser2<br />adduser2@donbyorg.onmicrosoft.com</UserLines>
              <RemoveButton>Remove</RemoveButton>
            </UserRow>
          </PickerBody>
          <PickerFooter><PrimaryButton $hover>Select</PrimaryButton></PickerFooter>
        </Picker>
      </Workspace>

      <Tooltip>Select</Tooltip>

      <Taskbar>
        <StartButton>
          <svg width="16" height="16" viewBox="0 0 16 16" fill="#fff">
            <path d="M0 2.300L6.600 1.300v6.200H0zM7.400 1.200L16 0v7.500H7.400zM0 8.300h6.600v6.300L0 13.700zM7.400 8.300H16V16l-8.600-1.200z" />
          </svg>
        </StartButton>
        <TaskSearch>
          <Magnifier c="#111" s={17} />
          <TaskHint>Type here to search</TaskHint>
          <SearchArt />
        </TaskSearch>
        <TaskIcon $w={48}>
          <svg width="16" height="16" viewBox="0 0 16 16"><circle cx="8" cy="8" r="6.800" fill="none" stroke="#fff" strokeWidth="2" /></svg>
        </TaskIcon>
        <TaskIcon $w={48}>
          <Stroke w={17} h={16} d="M1.500 0v2.500h9V0M1.500 16v-2.500h9V16M1.500 5h9v6h-9zM14.500 0v3M14.500 9v7M13.500 5.500h2.500v2h-2.500z" c="#fff" sw={1.2} />
        </TaskIcon>
        <TaskIcon $w={51}>
          <svg width="24" height="24" viewBox="0 0 24 24">
            <defs>
              <linearGradient id="edgeTop" x1="0" x2="1"><stop offset="0" stopColor="#2b9fe0" /><stop offset=".6" stopColor="#36c5c9" /><stop offset="1" stopColor="#63d957" /></linearGradient>
            </defs>
            <path d="M0 12A12 12 0 0 1 24 11c0 4-3 6-6.500 6-2.500 0-4-1-4-2s1-1.500 1-3.500c0-2.500-2.500-4-5.500-4C5 7.500 1.500 9.500 0 12z" fill="url(#edgeTop)" />
            <path d="M0 12c1.500-2.500 5-4.500 9-4.500 1 0 2 .2 2.800.5C9 9 8 11.500 8 13.500c0 5 4 9 8.500 9.500A12 12 0 0 1 0 12z" fill="#1574cf" />
            <path d="M11.500 8.200C9 9 8 11.500 8 13.500c0 5 4 9 8.500 9.500 2.500-1 4.500-2.800 5.500-5-2 1-4 1.200-6 .8-3.500-.7-5.500-3-5.500-6 0-2 .5-3.500 1-4.600z" fill="#0d4f9e" />
          </svg>
        </TaskIcon>
        <TaskIcon $w={49}>
          <svg width="22" height="20" viewBox="0 0 22 20">
            <path d="M0 1h9l2 2h10.500v16H0z" fill="#e8a928" />
            <path d="M0 4h21.500v15H0z" fill="#fbd569" />
            <path d="M4 19v-8.500h14V19h-4v-4.500H8V19z" fill="#3c8ede" />
          </svg>
          <StackedBar $w={40} />
        </TaskIcon>
        <TaskIcon $w={49}>
          <svg width="24" height="20" viewBox="0 0 24 20">
            <path d="M0 1h5.500l2.500 9 3.500-7h4.500L8.500 19H6z" fill="#e8231c" />
            <path d="M8.500 1H16l-2.500 5h-3z" fill="#f4452c" />
            <path d="M11.500 9l4-8 1 9 2.500-6.500L17.500 1H24l-7 18h-3.500z" fill="#fb4d34" />
          </svg>
        </TaskIcon>
        <TaskIcon $w={49}>
          <svg width="24" height="24" viewBox="0 0 24 24">
            <path d="M7 7V1.500h10V7" fill="none" stroke="#2aa7e8" strokeWidth="2" />
            <path d="M1 5.500h22V21a2.500 2.500 0 0 1-2.500 2.500h-17A2.500 2.500 0 0 1 1 21z" fill="#f3f3f3" />
            <path d="M7.500 10h4v4h-4z" fill="#f25022" /><path d="M12.500 10h4v4h-4z" fill="#7fba00" />
            <path d="M7.500 15h4v4h-4z" fill="#00a4ef" /><path d="M12.500 15h4v4h-4z" fill="#ffb900" />
          </svg>
        </TaskIcon>
        <TaskIcon $w={50}>
          <svg width="24" height="24" viewBox="0 0 24 24">
            <path d="M0 9l12-8 12 8v3H0z" fill="#0a5ab0" />
            <path d="M1.500 8.500h21L12 17z" fill="#f4f6f8" />
            <path d="M0 9l12 8 12-8v14H0z" fill="#1f9be8" />
            <path d="M0 23l12-8 4 2.500L0 23z" fill="#4fb8f2" />
          </svg>
          <CountBubble $x={29} $y={19}>16</CountBubble>
        </TaskIcon>
        <TaskIcon $w={48} $active><BraveShield s={24} /><RunningBar $w={48} /></TaskIcon>
        <TaskIcon $w={49}><Slack /><RunningBar $w={40} /></TaskIcon>
        <TaskIcon $w={49}><VsCode /><RunningBar $w={40} /></TaskIcon>
        <TaskIcon $w={49}><Notepad /><RunningBar $w={40} /></TaskIcon>

        <Tray>
          <svg width="24" height="20" viewBox="0 0 24 20">
            <path d="M5 15a5 5 0 0 1 .5-9.500A6 6 0 0 1 17 4.500 5 5 0 0 1 19 15z" fill="#cddcf3" />
            <path d="M5 15a5 5 0 0 1-4-3c6 1 16 1 21-2a4.500 4.500 0 0 1-3 5z" fill="#a3bfe6" />
            <path d="M16 9.500c2.500 3.500 3.500 5 3.500 6.500a3.500 3.500 0 0 1-7 0c0-1.500 1.500-3 3.500-6.500z" fill="#1796e0" />
          </svg>
          <Temperature>27°C</Temperature>
          <TrayItem $w={22}><Stroke w={12} h={7} d="M.7 6.300L6 1l5.300 5.300" c="#fff" sw={1.1} /></TrayItem>
          <TrayItem $w={26}>
            <svg width="17" height="14" viewBox="0 0 17 14">
              <path d="M4 10.500A4 4 0 0 1 4 4 5 5 0 0 1 12.500 2.500L15 7v3.500z" fill="#a9aaa9" />
              <path d="M4 10.500A4 4 0 0 1 5 3.500L12 8v2.500z" fill="#dcdcdc" />
              <circle cx="12.500" cy="9.500" r="4.300" fill="#d9222b" />
              <path d="M11 8l3 3M14 8l-3 3" stroke="#fff" strokeWidth="1.100" />
            </svg>
          </TrayItem>
          <TrayItem $w={22}><Stroke w={12} h={16} d="M2 2.500C4 .5 8 .5 10 2.500M2 13.500c2 2 6 2 8 0M1 5h7v6H1zM8 7.500L11 5.500v5L8 8.500" c="#fff" sw={1.1} /></TrayItem>
          <TrayItem $w={26}>
            <svg width="17" height="13" viewBox="0 0 17 13" fill="none" stroke="#fff">
              <path d="M1.500 0v2M4.500 0v2M.5 2.500h5v2L4 6H2L.5 4.500zM3 6v5.500h11.500v-7H7" />
              <path d="M15.500 6v4" />
              <path d="M5 6.500h8v3.500H5z" fill="#fff" stroke="none" />
            </svg>
          </TrayItem>
          <TrayItem $w={24}>
            <svg width="14" height="14" viewBox="0 0 14 14" fill="none" stroke="#d5d5d5">
              <path d="M1 13A12 12 0 0 1 13 1M4 13A9 9 0 0 1 13 4.500M7 13A6 6 0 0 1 13 7.500" />
              <circle cx="11.500" cy="11.500" r="1.500" fill="#fff" stroke="none" />
            </svg>
          </TrayItem>
          <TrayItem $w={20}>
            <Stroke w={17} h={13} d="M.7 4.500h2.600L7 1v11L3.300 8.500H.7zM9 4.500c1 1 1 3 0 4M11 2.800c2 2 2 5.400 0 7.400M13.500 1c3 3 3 8 0 11" c="#eee" />
          </TrayItem>
          <Clock>4:54 PM<br />9/15/2022</Clock>
          <NoticeCenter>
            <svg width="17" height="15" viewBox="0 0 17 15">
              <path d="M0 0h16v12H6l-3 3v-3H0z" fill="#fff" />
              <path d="M3 3.500h10M3 6h10M3 8.500h7" stroke="#33342c" />
            </svg>
            <CountBubble $x={14} $y={17} $dim>23</CountBubble>
          </NoticeCenter>
          <PeekStrip />
        </Tray>
      </Taskbar>
    </Screen>
  );
}
